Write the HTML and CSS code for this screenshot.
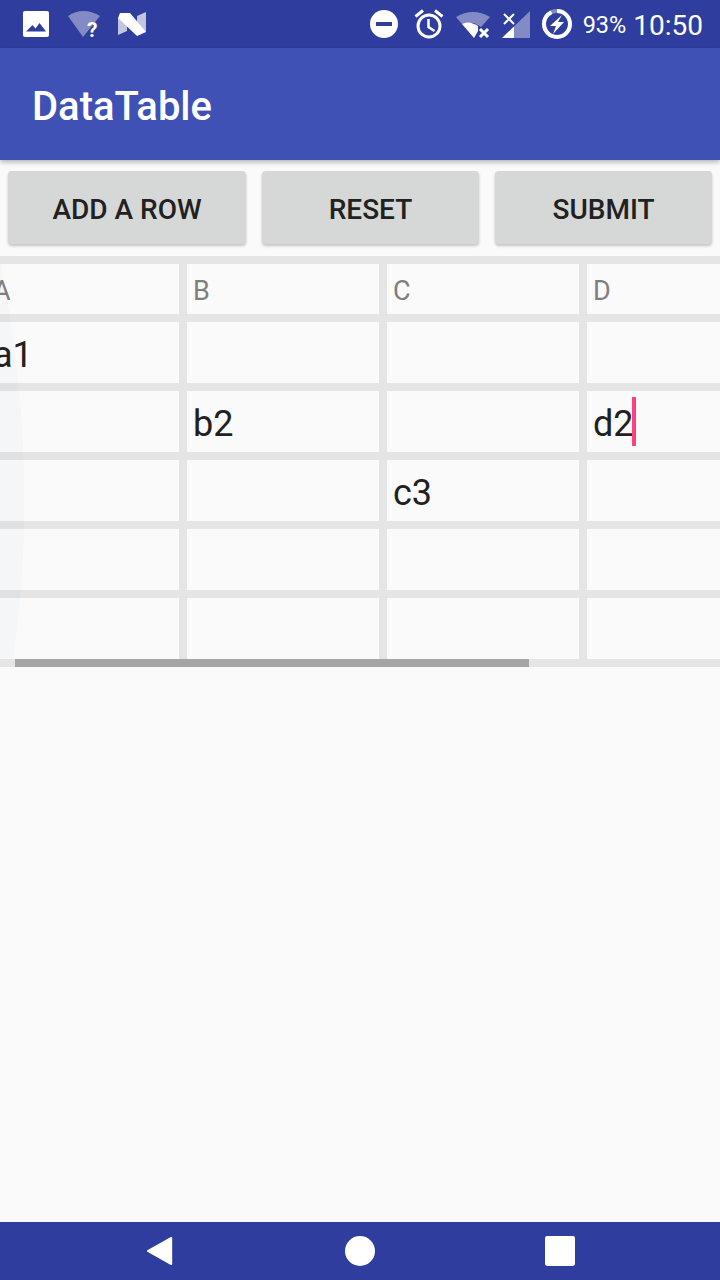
FILE: index.html
```html
<!DOCTYPE html>
<html lang="en">
<head>
    <meta charset="UTF-8">
    <meta name="viewport" content="width=device-width, initial-scale=1.0">
    <title>DataTable</title>
    <link rel="stylesheet" href="styles.css">
</head>
<body>
    <div class="screen">
        <!-- Status Bar -->
        <div class="status-bar">
            <div class="status-left">
                <svg class="icon-image" viewBox="0 0 26 26">
                    <rect width="26" height="26" rx="2" fill="#fff"/>
                    <path d="M3 20.500 9.500 14l3 3.500L16.500 12l6.500 8.500z" fill="#2f3e9e"/>
                </svg>
                <svg class="icon-wifi-q" viewBox="0 0 36 30">
                    <path d="M0 7Q15-3 32 7L15 28z" fill="#fff" fill-opacity=".4"/>
                    <text class="wifi-q-mark" x="19" y="28">?</text>
                </svg>
                <svg class="icon-n" viewBox="0 0 28 24">
                    <path d="M0 6 9 3V19L0 23z" fill="#fff" fill-opacity=".7"/>
                    <path d="M19 4 28 0V20L19 14z" fill="#fff" fill-opacity=".7"/>
                    <path d="M2 1 12 1 28 20 19 24 0 6z" fill="#fff"/>
                </svg>
            </div>
            <div class="status-right">
                <svg class="icon-dnd" viewBox="0 0 28 28">
                    <circle cx="14" cy="14" r="14" fill="#fff"/>
                    <rect x="6" y="12" width="16" height="4" fill="#2f3e9e"/>
                </svg>
                <svg class="icon-alarm" viewBox="0 0 30 30">
                    <circle cx="15" cy="17" r="11" fill="none" stroke="#fff" stroke-width="3"/>
                    <path d="M14.500 10v8l6 4" fill="none" stroke="#fff" stroke-width="2.500"/>
                    <path d="M1.500 7.500 9 1.500M21 1.500l7.500 6" fill="none" stroke="#fff" stroke-width="3"/>
                </svg>
                <svg class="icon-wifi" viewBox="0 0 36 30">
                    <path d="M0 8Q17-2 34 8L25 18 18 14 6 15z" fill="#fff" fill-opacity=".4"/>
                    <path d="M6 15Q13 11 22 17V22L18 29z" fill="#fff"/>
                    <path d="M24 20l8 8M32 20l-8 8" stroke="#fff" stroke-width="3"/>
                </svg>
                <svg class="icon-signal" viewBox="0 0 28 30">
                    <path d="M0 29 28 2V29z" fill="#fff" fill-opacity=".4"/>
                    <path d="M0 29 12 17.500V29z" fill="#fff"/>
                    <path d="M2 5l10 10M12 5 2 15" stroke="#fff" stroke-width="2"/>
                </svg>
                <svg class="icon-battery" viewBox="0 0 30 30">
                    <circle cx="15" cy="15" r="13" fill="none" stroke="#fff" stroke-opacity=".4" stroke-width="4"/>
                    <circle class="battery-ring" cx="15" cy="15" r="13" pathLength="100"/>
                    <path d="M20 6 8 17h6l-3 8 11-12h-6z" fill="#fff"/>
                </svg>
                <span class="battery-text">93%</span>
                <span class="clock">10:50</span>
            </div>
        </div>

        <!-- App Bar -->
        <div class="app-bar">DataTable</div>

        <!-- Action Buttons -->
        <div class="actions">
            <button class="btn">ADD A ROW</button>
            <button class="btn">RESET</button>
            <button class="btn">SUBMIT</button>
        </div>

        <!-- Table -->
        <div class="table-wrap">
            <div class="table">
                <div class="cell head">A</div>
                <div class="cell head">B</div>
                <div class="cell head">C</div>
                <div class="cell head">D</div>

                <div class="cell">a1</div>
                <div class="cell"></div>
                <div class="cell"></div>
                <div class="cell"></div>

                <div class="cell"></div>
                <div class="cell">b2</div>
                <div class="cell"></div>
                <div class="cell">d2<span class="caret"></span></div>

                <div class="cell"></div>
                <div class="cell"></div>
                <div class="cell">c3</div>
                <div class="cell"></div>

                <div class="cell"></div>
                <div class="cell"></div>
                <div class="cell"></div>
                <div class="cell"></div>

                <div class="cell"></div>
                <div class="cell"></div>
                <div class="cell"></div>
                <div class="cell"></div>
            </div>
            <div class="scroll-thumb"></div>
            <svg class="glow" viewBox="0 0 40 411">
                <path d="M0 4Q41 212 13 403H0z" fill="#3c50b4" fill-opacity=".025"/>
            </svg>
        </div>

        <div class="spacer"></div>

        <!-- Navigation Bar -->
        <div class="nav-bar">
            <svg class="nav-icon" viewBox="0 0 30 32">
                <path d="M2 16 27 2V30z" fill="#fff" stroke="#fff" stroke-width="2" stroke-linejoin="round"/>
            </svg>
            <svg class="nav-icon" viewBox="0 0 30 30">
                <circle cx="15" cy="15" r="15" fill="#fff"/>
            </svg>
            <svg class="nav-icon" viewBox="0 0 28 28">
                <rect width="28" height="28" rx="2" fill="#fff"/>
            </svg>
        </div>
    </div>
</body>
</html>
```

FILE: styles.css
```css
/* Basic Styling */
body {
    margin: 0;
    padding: 0;
    font-family: Roboto, 'Liberation Sans', sans-serif;
    background-color: #fafafa;
}

.screen {
    width: 720px;
    height: 1280px;
    display: flex;
    flex-direction: column;
    overflow: hidden;
}

/* Status Bar */
.status-bar {
    height: 48px;
    flex-shrink: 0;
    display: flex;
    justify-content: space-between;
    align-items: center;
    background-color: #2f3e9e;
    color: #fff;
}

.status-left {
    display: flex;
    align-items: center;
    padding-left: 23px;
}

.status-right {
    display: flex;
    align-items: center;
    padding-right: 17px;
}

.icon-image {
    width: 26px;
    height: 26px;
}

.icon-wifi-q {
    width: 36px;
    height: 30px;
    margin-left: 19px;
    overflow: visible;
}

.wifi-q-mark {
    font-size: 21px;
    font-weight: 700;
    fill: #fff;
}

.icon-n {
    width: 28px;
    height: 24px;
    margin-left: 14px;
}

.icon-dnd {
    width: 28px;
    height: 28px;
}

.icon-alarm {
    width: 30px;
    height: 30px;
    margin-left: 16px;
}

.icon-wifi {
    width: 36px;
    height: 30px;
    margin-left: 12px;
}

.icon-signal {
    width: 28px;
    height: 30px;
    margin-left: 10px;
}

.icon-battery {
    width: 30px;
    height: 30px;
    margin-left: 12px;
}

.battery-ring {
    fill: none;
    stroke: #fff;
    stroke-width: 4;
    stroke-dasharray: 93 100;
    transform: rotate(-90deg);
    transform-origin: 15px 15px;
}

.battery-text {
    font-size: 23.5px;
    margin-left: 11px;
    margin-top: 2px;
}

.clock {
    font-size: 28px;
    margin-left: 7px;
    margin-top: 2px;
}

/* App Bar */
.app-bar {
    height: 112px;
    flex-shrink: 0;
    box-sizing: border-box;
    padding: 4px 0 0 32px;
    display: flex;
    align-items: center;
    background-color: #3f51b5;
    color: #fff;
    font-size: 40px;
    font-weight: 500;
    box-shadow: 0 2px 5px rgba(0, 0, 0, 0.3);
    position: relative;
}

/* Buttons */
.actions {
    height: 96px;
    flex-shrink: 0;
    box-sizing: border-box;
    padding: 11px 8px 12px;
    display: grid;
    grid-template-columns: 238px 217px 217px;
    column-gap: 16px;
}

.btn {
    border: none;
    border-radius: 4px;
    padding: 3px 0 0;
    background-color: #d6d7d7;
    color: #212121;
    font-family: inherit;
    font-size: 28px;
    font-weight: 500;
    box-shadow: 0 2px 3px rgba(0, 0, 0, 0.22);
}

/* Table */
.table-wrap {
    height: 411px;
    flex-shrink: 0;
    box-sizing: border-box;
    padding: 8px 0;
    background-color: #e5e5e5;
    overflow: hidden;
    position: relative;
}

.table {
    margin-left: -13px;
    display: grid;
    grid-template-columns: repeat(4, 192px);
    grid-template-rows: 50px repeat(5, 61px);
    gap: 8px;
}

.cell {
    display: flex;
    align-items: center;
    padding: 5px 0 0 6px;
    background-color: #fafafa;
    color: #212121;
    font-size: 36px;
}

.cell.head {
    padding-top: 3px;
    color: #7f7f7f;
    font-size: 27px;
}

.caret {
    width: 4px;
    height: 49px;
    margin: -5px 0 0 -2px;
    background-color: #ff4081;
}

.scroll-thumb {
    position: absolute;
    left: 15px;
    bottom: 0;
    width: 514px;
    height: 8px;
    background-color: #a5a5a5;
}

.glow {
    position: absolute;
    left: 0;
    top: 0;
    width: 40px;
    height: 411px;
}

.spacer {
    flex: 1;
}

/* Navigation Bar */
.nav-bar {
    height: 58px;
    flex-shrink: 0;
    box-sizing: border-box;
    padding: 0 60px;
    display: grid;
    grid-template-columns: repeat(3, 200px);
    justify-items: center;
    align-items: center;
    background-color: #2f3e9e;
}

.nav-icon {
    width: 30px;
    height: 30px;
}
```
